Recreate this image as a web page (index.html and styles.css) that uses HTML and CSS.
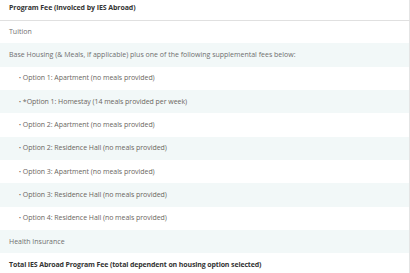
FILE: index.html
```html
<!DOCTYPE html>
<html>
<head>
<meta charset="utf-8">
<link rel="stylesheet" href="styles.css">
</head>
<body>
<div class="wrap">
<table class="fees">
<thead>
<tr><th>Program Fee (invoiced by IES Abroad)</th></tr>
</thead>
<tbody>
<tr><td>Tuition</td></tr>
<tr><td>Base Housing (&amp; Meals, if applicable) plus one of the following supplemental fees below:</td></tr>
<tr><td class="opt"><span class="dot">•</span>Option 1: Apartment (no meals provided)</td></tr>
<tr><td class="opt"><span class="dot">•</span>*Option 1: Homestay (14 meals provided per week)</td></tr>
<tr><td class="opt"><span class="dot">•</span>Option 2: Apartment (no meals provided)</td></tr>
<tr><td class="opt"><span class="dot">•</span>Option 2: Residence Hall (no meals provided)</td></tr>
<tr><td class="opt"><span class="dot">•</span>Option 3: Apartment (no meals provided)</td></tr>
<tr><td class="opt"><span class="dot">•</span>Option 3: Residence Hall (no meals provided)</td></tr>
<tr><td class="opt"><span class="dot">•</span>Option 4: Residence Hall (no meals provided)</td></tr>
<tr><td>Health Insurance</td></tr>
<tr><td class="total">Total IES Abroad Program Fee (total dependent on housing option selected)</td></tr>
</tbody>
</table>
</div>
</body>
</html>
```

FILE: styles.css
```css
html, body {
  margin: 0;
  padding: 0;
  background: #ffffff;
}
.wrap {
  margin-top: -3.33px;
  width: 410px;
}
.fees {
  width: 410px;
  border-collapse: collapse;
  border-right: 1px solid #e4e4e4;
  font-family: "Open Sans", "Liberation Sans", sans-serif;
  font-size: 7px;
}
.fees th, .fees td {
  text-align: left;
  padding: 0 9px;
  height: 23.33px;
  line-height: 10px;
  box-sizing: border-box;
  color: #6f6f6f;
  font-weight: 400;
  white-space: nowrap;
}
.fees th {
  color: #333333;
  font-weight: 700;
  letter-spacing: -0.08px;
  border-bottom: 1px solid #e0e0e0;
}
.fees tbody tr:nth-child(even) td {
  background: #f2f8f8;
}
.fees td.opt {
  padding-left: 19px;
  color: #6b6661;
  letter-spacing: -0.05px;
}
.dot {
  font-size: 5px;
  margin-right: 2px;
  color: #555555;
}
.fees td.total {
  color: #333333;
  font-weight: 700;
  letter-spacing: -0.13px;
}
```
